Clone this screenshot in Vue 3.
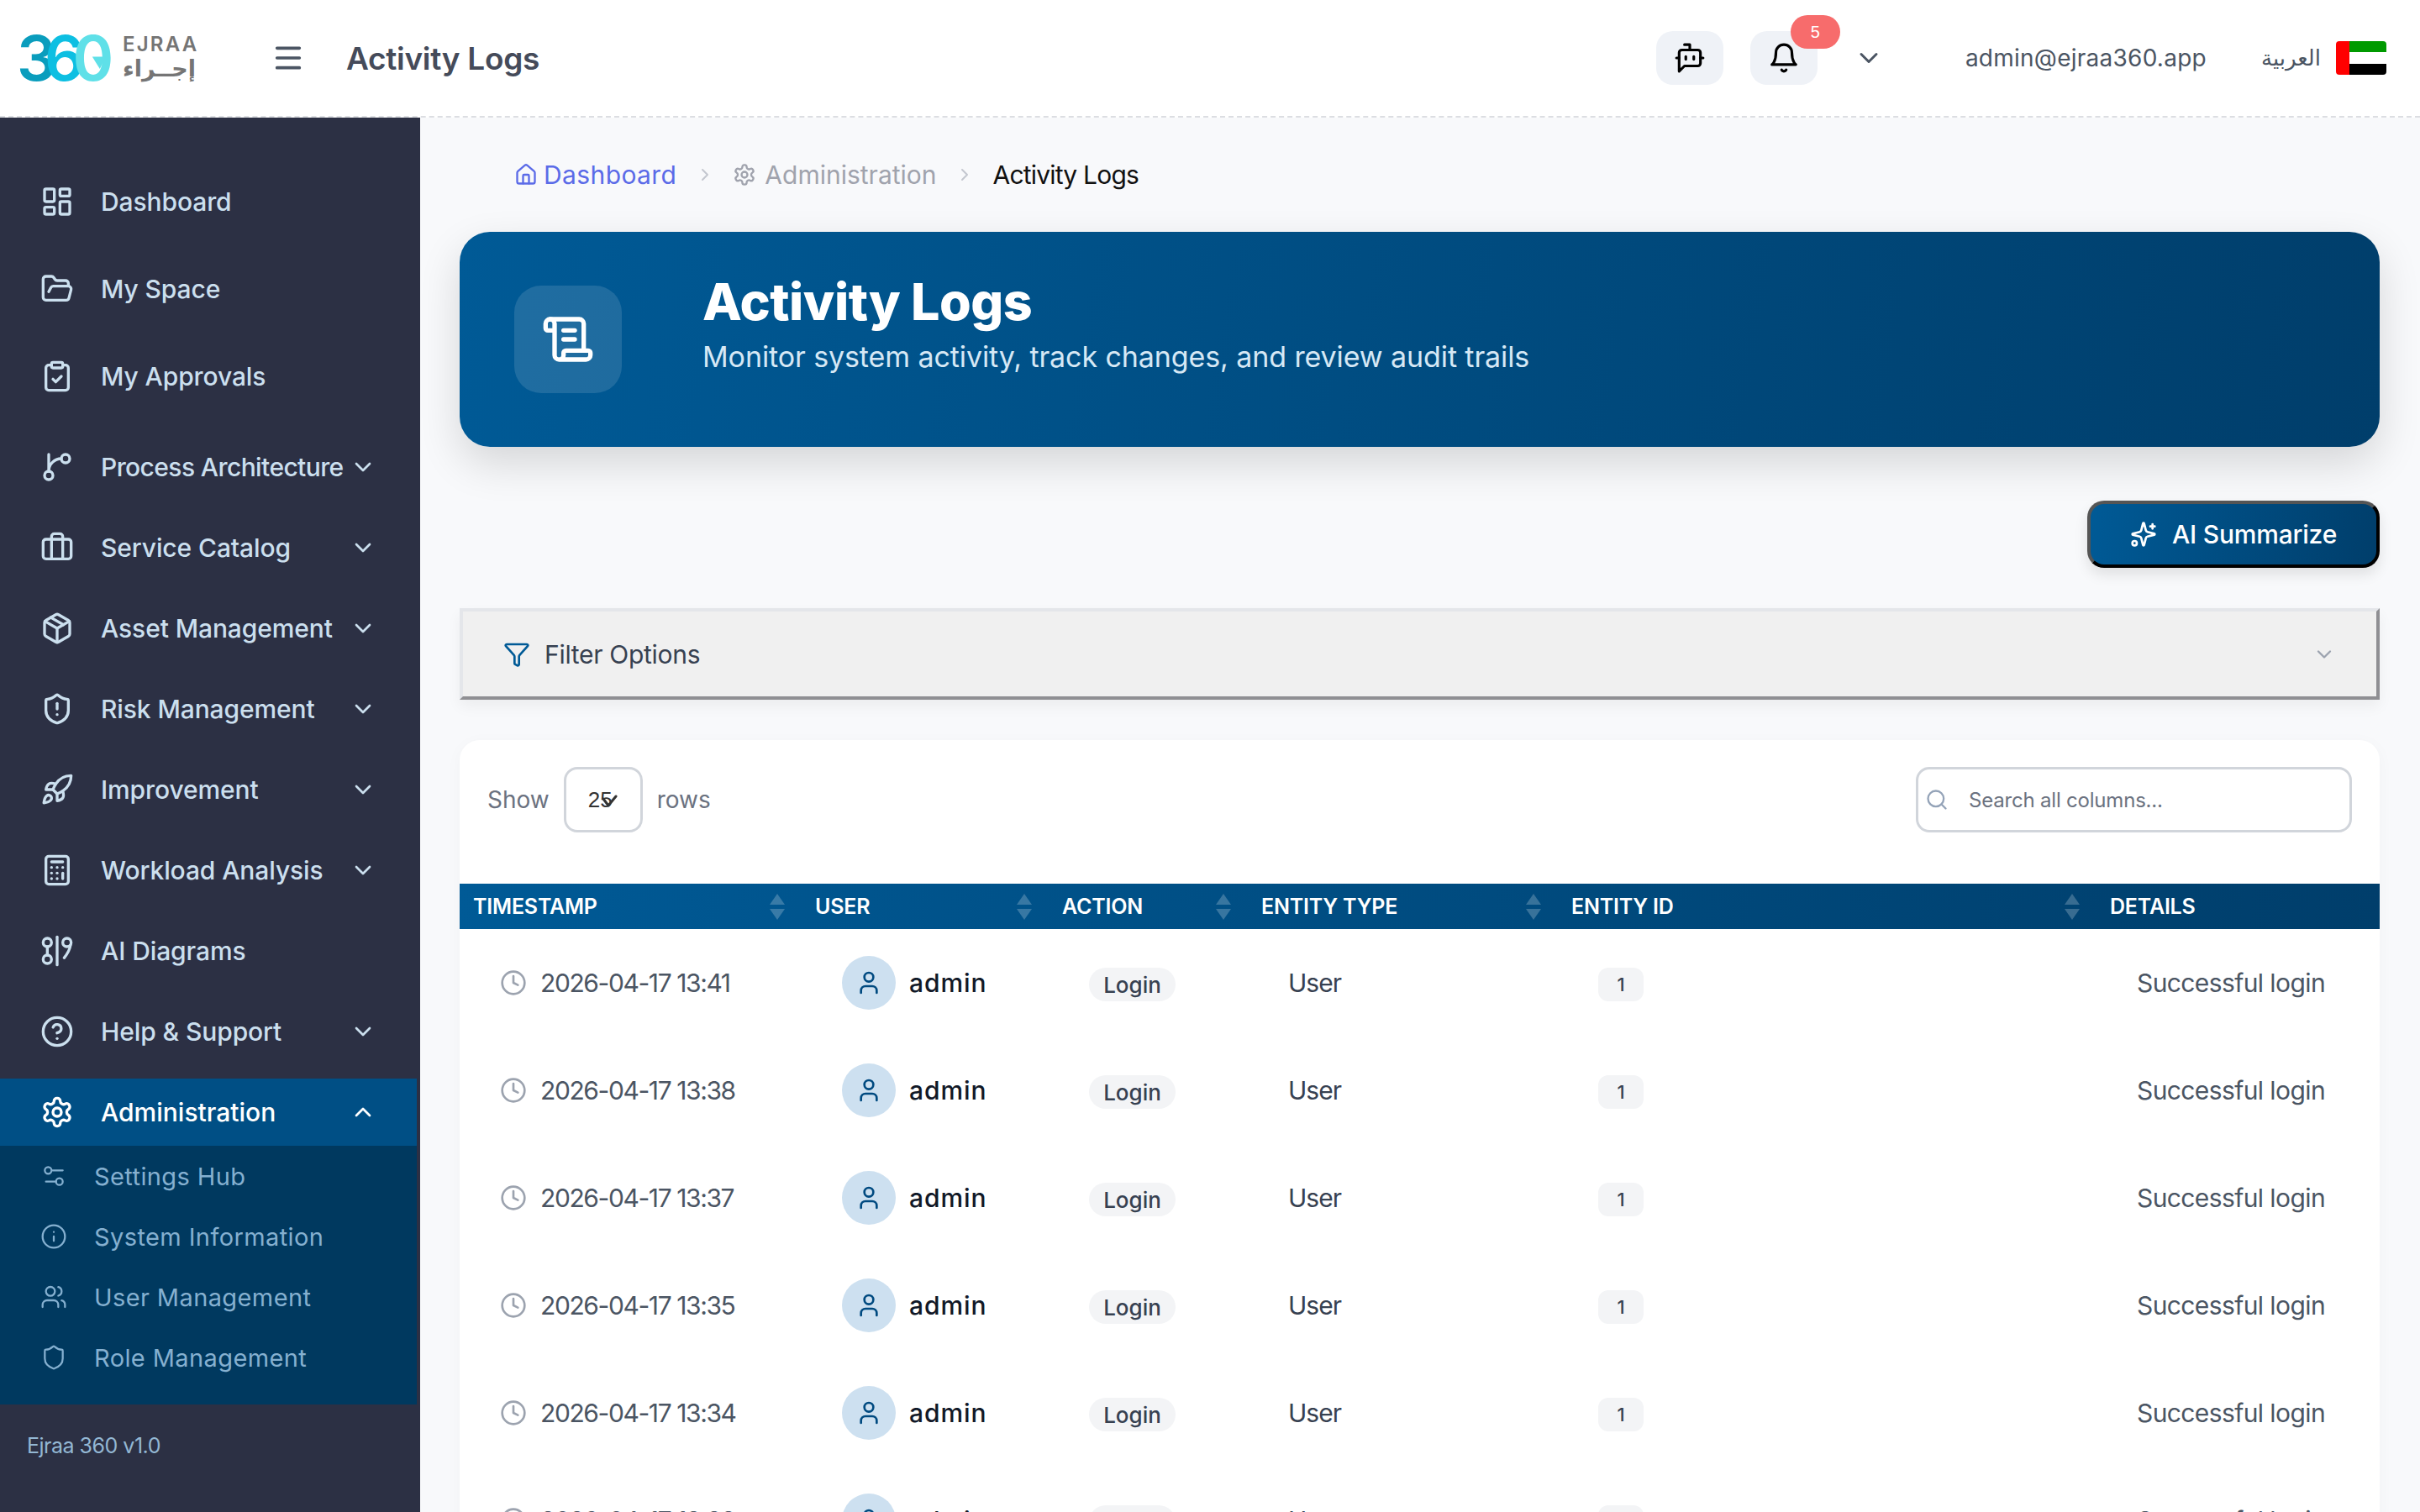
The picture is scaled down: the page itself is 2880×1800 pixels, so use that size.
<template>
  <div class="app">
    <!-- Top bar -->
    <header class="topbar">
      <div class="logo">
        <div class="logo-mark">
          <span class="d1">3</span><span class="d2">6</span><span class="d3">0</span>
          <svg class="logo-arrow" viewBox="0 0 20 20"><polygon points="2,4 20,4 12,20" fill="#5fe0e8" /></svg>
        </div>
        <div class="logo-words">
          <span class="logo-en">EJRAA</span>
          <span class="logo-ar">إجــراء</span>
        </div>
      </div>
      <svg class="burger" viewBox="0 0 24 24" v-html="icons.menu"></svg>
      <h1 class="page-title">Activity Logs</h1>
      <div class="top-right">
        <button class="top-btn"><svg class="top-ico" viewBox="0 0 24 24" v-html="icons.bot"></svg></button>
        <button class="top-btn bell">
          <svg class="top-ico" viewBox="0 0 24 24" v-html="icons.bell"></svg>
          <span class="badge">5</span>
        </button>
        <svg class="top-chev" viewBox="0 0 24 24" v-html="icons.chevron"></svg>
        <span class="email">admin@ejraa360.app</span>
        <span class="lang">العربية</span>
        <div class="flag">
          <div class="flag-red"></div>
          <div class="flag-bands"><i class="g"></i><i class="w"></i><i class="k"></i></div>
        </div>
      </div>
    </header>

    <div class="body">
      <!-- Sidebar -->
      <aside class="sidebar">
        <nav class="nav">
          <a v-for="item in navTop" :key="item.label" class="nav-item top">
            <svg class="nav-ico" viewBox="0 0 24 24" v-html="icons[item.icon]"></svg>
            <span>{{ item.label }}</span>
          </a>
          <a v-for="item in navGroups" :key="item.label" class="nav-item">
            <svg class="nav-ico" viewBox="0 0 24 24" v-html="icons[item.icon]"></svg>
            <span>{{ item.label }}</span>
            <svg v-if="item.more" class="nav-chev" viewBox="0 0 24 24" v-html="icons.chevron"></svg>
          </a>
          <a class="nav-item active">
            <svg class="nav-ico" viewBox="0 0 24 24" v-html="icons.settings"></svg>
            <span>Administration</span>
            <svg class="nav-chev" viewBox="0 0 24 24" v-html="icons.chevronUp"></svg>
          </a>
          <div class="subnav">
            <a v-for="item in navSub" :key="item.label" class="sub-item">
              <svg class="sub-ico" viewBox="0 0 24 24" v-html="icons[item.icon]"></svg>
              <span>{{ item.label }}</span>
            </a>
          </div>
        </nav>
        <div class="version">Ejraa 360 v1.0</div>
      </aside>

      <!-- Main content -->
      <main class="main">
        <div class="crumbs">
          <svg class="crumb-ico home" viewBox="0 0 24 24" v-html="icons.home"></svg>
          <span class="crumb-link">Dashboard</span>
          <svg class="crumb-sep" viewBox="0 0 24 24" v-html="icons.chevronRight"></svg>
          <svg class="crumb-ico gear" viewBox="0 0 24 24" v-html="icons.settings"></svg>
          <span class="crumb-mid">Administration</span>
          <svg class="crumb-sep" viewBox="0 0 24 24" v-html="icons.chevronRight"></svg>
          <span class="crumb-now">Activity Logs</span>
        </div>

        <section class="hero">
          <div class="hero-box">
            <svg class="hero-ico" viewBox="0 0 24 24" v-html="icons.scroll"></svg>
          </div>
          <div class="hero-text">
            <h2>Activity Logs</h2>
            <p>Monitor system activity, track changes, and review audit trails</p>
          </div>
        </section>

        <div class="actions">
          <button class="ai-btn">
            <svg class="ai-ico" viewBox="0 0 24 24" v-html="icons.sparkles"></svg>
            AI Summarize
          </button>
        </div>

        <div class="filter">
          <svg class="filter-ico" viewBox="0 0 24 24" v-html="icons.funnel"></svg>
          <span>Filter Options</span>
          <svg class="filter-chev" viewBox="0 0 24 24" v-html="icons.chevron"></svg>
        </div>

        <section class="card">
          <div class="controls">
            <div class="show">
              <span>Show</span>
              <div class="select">
                25
                <svg class="select-mark" viewBox="0 0 20 20"><path d="M3 6l6 8L18 3" /></svg>
              </div>
              <span>rows</span>
            </div>
            <div class="search">
              <svg class="search-ico" viewBox="0 0 24 24" v-html="icons.search"></svg>
              <span>Search all columns...</span>
            </div>
          </div>

          <table class="table">
            <colgroup>
              <col v-for="w in colWidths" :key="w" :style="{ width: w + 'px' }" />
            </colgroup>
            <thead>
              <tr>
                <th v-for="col in columns" :key="col">
                  <div class="th-in">
                    <span>{{ col }}</span>
                    <span v-if="col !== 'Details'" class="sort"><i class="up"></i><i class="down"></i></span>
                  </div>
                </th>
              </tr>
            </thead>
            <tbody>
              <tr v-for="time in rows" :key="time">
                <td>
                  <div class="when">
                    <svg class="clock" viewBox="0 0 24 24" v-html="icons.clock"></svg>
                    <span>2026-04-17 {{ time }}</span>
                  </div>
                </td>
                <td>
                  <div class="who">
                    <span class="avatar"><svg viewBox="0 0 24 24" v-html="icons.user"></svg></span>
                    <span class="name">admin</span>
                  </div>
                </td>
                <td><span class="pill">Login</span></td>
                <td class="etype">User</td>
                <td><span class="id-pill">1</span></td>
                <td class="details">Successful login</td>
              </tr>
            </tbody>
          </table>
        </section>
      </main>
    </div>
  </div>
</template>

<script setup>
const icons = {
  menu: '<path d="M4 5h16M4 12h16M4 19h16" />',
  bot: '<path d="M12 6V2H8" /><path d="m8 18-4 4V8a2 2 0 0 1 2-2h12a2 2 0 0 1 2 2v8a2 2 0 0 1-2 2Z" /><path d="M2 12h2" /><path d="M9 11v2" /><path d="M15 11v2" /><path d="M20 12h2" />',
  bell: '<path d="M6 8a6 6 0 0 1 12 0c0 7 3 9 3 9H3s3-2 3-9" /><path d="M10.3 21a1.94 1.94 0 0 0 3.4 0" />',
  chevron: '<path d="m6 9 6 6 6-6" />',
  chevronUp: '<path d="m18 15-6-6-6 6" />',
  chevronRight: '<path d="m9 18 6-6-6-6" />',
  dashboard: '<rect width="7" height="9" x="3" y="3" rx="1" /><rect width="7" height="5" x="14" y="3" rx="1" /><rect width="7" height="9" x="14" y="12" rx="1" /><rect width="7" height="5" x="3" y="16" rx="1" />',
  folder: '<path d="m6 14 1.5-2.9A2 2 0 0 1 9.24 10H20a2 2 0 0 1 1.94 2.5l-1.54 6a2 2 0 0 1-1.95 1.5H4a2 2 0 0 1-2-2V5a2 2 0 0 1 2-2h3.9a2 2 0 0 1 1.69.9l.81 1.2a2 2 0 0 0 1.67.9H18a2 2 0 0 1 2 2v2" />',
  clipboard: '<rect width="8" height="4" x="8" y="2" rx="1" /><path d="M16 4h2a2 2 0 0 1 2 2v14a2 2 0 0 1-2 2H6a2 2 0 0 1-2-2V6a2 2 0 0 1 2-2h2" /><path d="m9 14 2 2 4-4" />',
  branch: '<path d="M15 6a9 9 0 0 0-9 9V3" /><circle cx="18" cy="6" r="3" /><circle cx="6" cy="18" r="3" />',
  briefcase: '<path d="M16 20V4a2 2 0 0 0-2-2h-4a2 2 0 0 0-2 2v16" /><rect width="20" height="14" x="2" y="6" rx="2" />',
  box: '<path d="m7.5 4.27 9 5.15" /><path d="M21 8a2 2 0 0 0-1-1.73l-7-4a2 2 0 0 0-2 0l-7 4A2 2 0 0 0 3 8v8a2 2 0 0 0 1 1.73l7 4a2 2 0 0 0 2 0l7-4A2 2 0 0 0 21 16Z" /><path d="m3.3 7 8.7 5 8.7-5" /><path d="M12 22V12" />',
  shieldAlert: '<path d="M20 13c0 5-3.5 7.5-7.66 8.95a1 1 0 0 1-.67-.01C7.5 20.5 4 18 4 13V6a1 1 0 0 1 1-1c2 0 4.5-1.2 6.24-2.72a1.17 1.17 0 0 1 1.52 0C14.51 3.81 17 5 19 5a1 1 0 0 1 1 1z" /><path d="M12 8v4" /><path d="M12 16h.01" />',
  rocket: '<path d="M4.5 16.5c-1.5 1.26-2 5-2 5s3.74-.5 5-2c.71-.84.7-2.13-.09-2.91a2.18 2.18 0 0 0-2.91-.09z" /><path d="m12 15-3-3a22 22 0 0 1 2-3.95A12.88 12.88 0 0 1 22 2c0 2.72-.78 7.5-6 11a22.35 22.35 0 0 1-4 2z" /><path d="M9 12H4s.55-3.03 2-4c1.62-1.08 5 0 5 0" /><path d="M12 15v5s3.03-.55 4-2c1.08-1.62 0-5 0-5" />',
  calculator: '<rect width="16" height="20" x="4" y="2" rx="2" /><path d="M8 6h8" /><path d="M16 14v4" /><path d="M16 10h.01" /><path d="M12 10h.01" /><path d="M8 10h.01" /><path d="M12 14h.01" /><path d="M8 14h.01" /><path d="M12 18h.01" /><path d="M8 18h.01" />',
  diagram: '<circle cx="5" cy="6" r="3" /><circle cx="5" cy="18" r="3" /><path d="M5 9v6" /><path d="M12 2v20" /><circle cx="19" cy="6" r="3" /><path d="M21.5 8c-.5 3-2 6-4.5 9" />',
  help: '<circle cx="12" cy="12" r="10" /><path d="M9.09 9a3 3 0 0 1 5.83 1c0 2-3 3-3 3" /><path d="M12 17h.01" />',
  settings: '<path d="M12.22 2h-.44a2 2 0 0 0-2 2v.18a2 2 0 0 1-1 1.73l-.43.25a2 2 0 0 1-2 0l-.15-.08a2 2 0 0 0-2.73.73l-.22.38a2 2 0 0 0 .73 2.73l.15.1a2 2 0 0 1 1 1.72v.51a2 2 0 0 1-1 1.74l-.15.09a2 2 0 0 0-.73 2.73l.22.38a2 2 0 0 0 2.73.73l.15-.08a2 2 0 0 1 2 0l.43.25a2 2 0 0 1 1 1.73V20a2 2 0 0 0 2 2h.44a2 2 0 0 0 2-2v-.18a2 2 0 0 1 1-1.73l.43-.25a2 2 0 0 1 2 0l.15.08a2 2 0 0 0 2.73-.73l.22-.39a2 2 0 0 0-.73-2.73l-.15-.08a2 2 0 0 1-1-1.74v-.5a2 2 0 0 1 1-1.74l.15-.09a2 2 0 0 0 .73-2.73l-.22-.38a2 2 0 0 0-2.73-.73l-.15.08a2 2 0 0 1-2 0l-.43-.25a2 2 0 0 1-1-1.73V4a2 2 0 0 0-2-2z" /><circle cx="12" cy="12" r="3" />',
  sliders: '<path d="M20 7h-9" /><path d="M14 17H5" /><circle cx="17" cy="17" r="3" /><circle cx="7" cy="7" r="3" />',
  info: '<circle cx="12" cy="12" r="10" /><path d="M12 16v-4" /><path d="M12 8h.01" />',
  users: '<path d="M16 21v-2a4 4 0 0 0-4-4H6a4 4 0 0 0-4 4v2" /><circle cx="9" cy="7" r="4" /><path d="M22 21v-2a4 4 0 0 0-3-3.87" /><path d="M16 3.13a4 4 0 0 1 0 7.75" />',
  shield: '<path d="M20 13c0 5-3.5 7.5-7.66 8.95a1 1 0 0 1-.67-.01C7.5 20.5 4 18 4 13V6a1 1 0 0 1 1-1c2 0 4.5-1.2 6.24-2.72a1.17 1.17 0 0 1 1.52 0C14.51 3.81 17 5 19 5a1 1 0 0 1 1 1z" />',
  home: '<path d="M15 21v-8a1 1 0 0 0-1-1h-4a1 1 0 0 0-1 1v8" /><path d="M3 10a2 2 0 0 1 .709-1.528l7-5.999a2 2 0 0 1 2.582 0l7 5.999A2 2 0 0 1 21 10v9a2 2 0 0 1-2 2H5a2 2 0 0 1-2-2z" />',
  scroll: '<path d="M15 12h-5" /><path d="M15 8h-5" /><path d="M19 17V5a2 2 0 0 0-2-2H4" /><path d="M8 21h12a2 2 0 0 0 2-2v-1a1 1 0 0 0-1-1H11a1 1 0 0 0-1 1v1a2 2 0 1 1-4 0V5a2 2 0 1 0-4 0v2a1 1 0 0 0 1 1h3" />',
  sparkles: '<path d="M9.937 15.5A2 2 0 0 0 8.5 14.063l-6.135-1.582a.5.5 0 0 1 0-.962L8.5 9.936A2 2 0 0 0 9.937 8.5l1.582-6.135a.5.5 0 0 1 .963 0L14.063 8.5A2 2 0 0 0 15.5 9.937l6.135 1.581a.5.5 0 0 1 0 .964L15.5 14.063a2 2 0 0 0-1.437 1.437l-1.582 6.135a.5.5 0 0 1-.963 0z" /><path d="M20 3v4" /><path d="M22 5h-4" /><circle cx="4" cy="20" r="2" />',
  funnel: '<path d="M10 20a1 1 0 0 0 .553.895l2 1A1 1 0 0 0 14 21v-7a2 2 0 0 1 .517-1.341L21.74 4.67A1 1 0 0 0 21 3H3a1 1 0 0 0-.742 1.67l7.225 7.989A2 2 0 0 1 10 14z" />',
  search: '<circle cx="11" cy="11" r="8" /><path d="m21 21-4.3-4.3" />',
  clock: '<circle cx="12" cy="12" r="10" /><path d="M12 6v6l4 2" />',
  user: '<path d="M19 21v-2a4 4 0 0 0-4-4H9a4 4 0 0 0-4 4v2" /><circle cx="12" cy="7" r="4" />',
}

const navTop = [
  { label: 'Dashboard', icon: 'dashboard' },
  { label: 'My Space', icon: 'folder' },
  { label: 'My Approvals', icon: 'clipboard' },
]
const navGroups = [
  { label: 'Process Architecture', icon: 'branch', more: true },
  { label: 'Service Catalog', icon: 'briefcase', more: true },
  { label: 'Asset Management', icon: 'box', more: true },
  { label: 'Risk Management', icon: 'shieldAlert', more: true },
  { label: 'Improvement', icon: 'rocket', more: true },
  { label: 'Workload Analysis', icon: 'calculator', more: true },
  { label: 'AI Diagrams', icon: 'diagram', more: false },
  { label: 'Help & Support', icon: 'help', more: true },
]
const navSub = [
  { label: 'Settings Hub', icon: 'sliders' },
  { label: 'System Information', icon: 'info' },
  { label: 'User Management', icon: 'users' },
  { label: 'Role Management', icon: 'shield' },
]

const columns = ['Timestamp', 'User', 'Action', 'Entity Type', 'Entity ID', 'Details']
const colWidths = [407, 294, 237, 369, 641, 337]
const rows = ['13:41', '13:38', '13:37', '13:35', '13:34', '13:33']
</script>

<style scoped>
.app {
  width: 2880px;
  height: 1800px;
  overflow: hidden;
  display: flex;
  flex-direction: column;
  font-family: Inter, "Noto Sans", sans-serif;
  background: #f8f9fb;
  color: #374151;
}
svg {
  fill: none;
  stroke: currentColor;
  stroke-width: 2;
  stroke-linecap: round;
  stroke-linejoin: round;
  flex: none;
}

/* top bar */
.topbar {
  height: 138px;
  flex: none;
  display: flex;
  align-items: center;
  background: #fff;
  border-bottom: 2px dashed #dcdee2;
  padding: 0 40px 0 20px;
}
.logo { display: flex; align-items: center; width: 288px; }
.logo-mark {
  position: relative;
  width: 106px;
  height: 54px;
  margin-right: 20px;
  font-size: 74px;
  font-weight: 600;
  line-height: 54px;
  letter-spacing: -14px;
  white-space: nowrap;
}
.d1 { color: #0a9dbd; }
.d2 { color: #0dbfe2; }
.d3 { color: #5fe0e8; }
.logo-arrow { position: absolute; right: 0; top: 22px; width: 18px; height: 18px; stroke: none; }
.logo-words { display: flex; flex-direction: column; color: #757575; }
.logo-en { font-size: 24px; font-weight: 600; letter-spacing: 2.2px; line-height: 26px; }
.logo-ar { font-family: "DejaVu Sans", sans-serif; font-size: 27px; line-height: 32px; font-weight: 700; direction: rtl; text-align: right; width: 87px; }
.burger { width: 40px; height: 40px; color: #4b5563; stroke-width: 2.2; margin-left: 15px; }
.page-title { margin: 0 0 0 49px; font-size: 37px; font-weight: 600; color: #454b5a; letter-spacing: -.3px; }
.top-right { margin-left: auto; display: flex; align-items: center; }
.top-btn {
  position: relative;
  width: 80px;
  height: 64px;
  margin-right: 32px;
  padding: 0;
  border: 0;
  border-radius: 20px;
  background: #eff2f7;
  display: flex;
  align-items: center;
  justify-content: center;
  color: #000;
}
.top-ico { width: 38px; height: 38px; stroke-width: 2; }
.top-btn.bell { margin-right: 43px; }
.badge {
  position: absolute;
  left: 48px;
  top: -19px;
  width: 59px;
  height: 40px;
  border-radius: 20px;
  background: #f76c6c;
  color: #fff;
  font-size: 20px;
  font-weight: 500;
  display: flex;
  align-items: center;
  justify-content: center;
}
.top-chev { width: 36px; height: 36px; color: #4b5563; margin-right: 97px; }
.email { font-size: 28px; color: #4b5563; letter-spacing: .25px; margin-right: 65px; }
.lang { font-family: "DejaVu Sans", sans-serif; font-size: 26px; color: #4b5563; margin-right: 18px; }
.flag { width: 60px; height: 40px; border-radius: 4px; overflow: hidden; display: flex; }
.flag-red { width: 16px; background: #f00; }
.flag-bands { flex: 1; display: flex; flex-direction: column; }
.flag-bands i { flex: 1; display: block; }
.g { background: #009a00; }
.w { background: #fff; }
.k { background: #000; }

.body { flex: 1; display: flex; min-height: 0; }

/* sidebar */
.sidebar {
  width: 500px;
  flex: none;
  background: #2c3044;
  color: #cbdfee;
  display: flex;
  flex-direction: column;
}
.nav { padding: 48px 4px 0 0; display: flex; flex-direction: column; }
.nav-item {
  height: 80px;
  flex: none;
  margin: 8px 0;
  padding-left: 48px;
  display: flex;
  align-items: center;
  font-size: 30px;
  font-weight: 500;
  letter-spacing: -.1px;
  position: relative;
}
.nav-item.top { margin: 12px 0; }
.nav-item.top:nth-child(3) { margin-bottom: 20px; }
.nav-item:nth-child(4) { letter-spacing: -.6px; }
.nav-ico { width: 40px; height: 40px; margin-right: 32px; stroke-width: 2; }
.nav-chev { position: absolute; left: 416px; top: 24px; width: 32px; height: 32px; }
.nav-item.active { background: #004f85; color: #fff; margin-bottom: 0; letter-spacing: 0; }
.subnav { background: #00395f; padding-bottom: 20px; }
.sub-item {
  height: 72px;
  padding-left: 48px;
  display: flex;
  align-items: center;
  font-size: 29px;
  letter-spacing: .4px;
  color: #85b0d0;
}
.sub-ico { width: 32px; height: 32px; margin-right: 32px; stroke-width: 1.7; }
.version { padding: 34px 0 0 32px; font-size: 25px; letter-spacing: -.5px; color: #93b7d3; }

/* main */
.main { flex: 1; min-width: 0; padding: 0 48px 0 47px; }
.crumbs {
  height: 136px;
  padding: 0 0 0 65px;
  display: flex;
  align-items: center;
  font-size: 30px;
  box-sizing: border-box;
}
.crumb-ico { width: 28px; height: 28px; }
.home { color: #5b6be8; margin-right: 7px; }
.gear { color: #a0a3ad; margin-right: 10px; }
.crumb-link { color: #5b6be8; letter-spacing: .4px; }
.crumb-mid { color: #a0a3ad; }
.crumb-now { color: #111; letter-spacing: -.8px; }
.crumb-sep { width: 24px; height: 24px; color: #c4c7cf; margin: 0 21.5px; }

.hero {
  height: 256px;
  border-radius: 36px;
  background: linear-gradient(100deg, #005a96, #003e6b);
  box-shadow: 0 20px 50px rgba(0, 0, 0, .14);
  padding-left: 65px;
  display: flex;
  align-items: center;
  color: #fff;
}
.hero-box {
  width: 128px;
  height: 128px;
  border-radius: 32px;
  background: rgba(255, 255, 255, .12);
  display: flex;
  align-items: center;
  justify-content: center;
}
.hero-ico { width: 64px; height: 64px; }
.hero-text { margin: -42px 0 0 96px; }
.hero-text h2 { margin: 0; font-size: 61px; font-weight: 800; line-height: 76px; letter-spacing: -.5px; }
.hero-text p { margin: 7px 0 0; font-size: 34px; letter-spacing: -.1px; color: #d6e8f5; }

.actions { display: flex; justify-content: flex-end; margin-top: 64px; }
.ai-btn {
  width: 348px;
  height: 80px;
  border-radius: 20px;
  border: 4px solid;
  border-color: #555 #000 #000 #555;
  background: linear-gradient(100deg, #005a96, #003e6b);
  box-shadow: 0 8px 16px rgba(0, 0, 0, .1);
  color: #fff;
  font-family: inherit;
  font-size: 30px;
  font-weight: 500;
  letter-spacing: -.2px;
  display: flex;
  align-items: center;
  justify-content: center;
  gap: 18px;
  padding: 0;
}
.ai-ico { width: 32px; height: 32px; }

.filter {
  height: 109px;
  margin-top: 48px;
  box-sizing: border-box;
  border: 4px solid;
  border-color: #e4e6ea #8f8f93 #8f8f93 #e4e6ea;
  background: #f0f0f0;
  box-shadow: 0 8px 16px rgba(0, 0, 0, .05);
  padding: 0 48px;
  display: flex;
  align-items: center;
  font-size: 30px;
  letter-spacing: -.3px;
  color: #374151;
}
.filter-ico { width: 32px; height: 32px; color: #005a96; margin-right: 17px; }
.filter-chev { width: 28px; height: 28px; color: #9ca3af; margin-left: auto; }

.card {
  margin-top: 48px;
  background: #fff;
  border-radius: 24px 24px 0 0;
  box-shadow: 0 4px 20px rgba(0, 0, 0, .03);
  height: 1000px;
}
.controls {
  height: 171px;
  padding: 32px 33px 0;
  box-sizing: border-box;
  display: flex;
  justify-content: space-between;
  align-items: flex-start;
}
.show { display: flex; align-items: center; height: 78px; color: #6b7280; font-size: 28px; gap: 17px; }
.select {
  position: relative;
  width: 94px;
  height: 78px;
  box-sizing: border-box;
  border: 3px solid #d1d5db;
  border-radius: 16px;
  padding-left: 26px;
  display: flex;
  align-items: center;
  font-family: "Liberation Sans", sans-serif;
  font-size: 26px;
  color: #333;
}
.select-mark { position: absolute; left: 41px; top: 29px; width: 20px; height: 20px; color: #333; stroke-width: 3; }
.search {
  width: 519px;
  height: 78px;
  box-sizing: border-box;
  border: 3px solid #d1d5db;
  border-radius: 16px;
  padding-left: 8px;
  display: flex;
  align-items: center;
  font-size: 24px;
  letter-spacing: -.2px;
  color: #6b7280;
}
.search-ico { width: 28px; height: 28px; color: #94a3b8; margin-right: 24px; }

.table { width: 2285px; border-collapse: collapse; table-layout: fixed; }
thead tr { background: linear-gradient(100deg, #005a96, #003e6b); }
th {
  height: 54px;
  padding: 0 16px;
  text-align: left;
  color: #fff;
  font-size: 25px;
  font-weight: 600;
  text-transform: uppercase;
  letter-spacing: -.2px;
}
.th-in { display: flex; align-items: center; justify-content: space-between; padding-right: 4px; }
.sort { display: flex; flex-direction: column; gap: 5px; opacity: .22; }
.sort i { display: block; width: 0; height: 0; border-left: 9px solid transparent; border-right: 9px solid transparent; }
.sort .up { border-bottom: 13px solid #fff; }
.sort .down { border-top: 13px solid #fff; }
td { height: 128px; padding: 0 48px; font-size: 30px; color: #4b5563; white-space: nowrap; }
.when { display: flex; align-items: center; letter-spacing: -1.4px; }
.clock { width: 32px; height: 32px; color: #9ca3af; margin-right: 16px; }
.who { display: flex; align-items: center; }
.avatar {
  width: 64px;
  height: 64px;
  border-radius: 50%;
  background: #cde0f0;
  display: flex;
  align-items: center;
  justify-content: center;
  color: #004a80;
  margin-right: 16px;
}
.avatar svg { width: 32px; height: 32px; }
.name { color: #111827; font-weight: 500; letter-spacing: .9px; }
.pill, .id-pill {
  display: inline-flex;
  align-items: center;
  justify-content: center;
  height: 40px;
  margin-top: 4px;
  background: #f3f4f6;
  color: #374151;
  vertical-align: middle;
}
.pill { width: 103px; border-radius: 20px; font-size: 26px; font-weight: 500; }
.id-pill { width: 54px; border-radius: 12px; font-size: 22px; font-weight: 500; }
.etype { color: #374151; letter-spacing: -1px; }
.details { color: #4b5563; padding-right: 0; letter-spacing: -.6px; }
</style>

<style>
html, body { margin: 0; background: #f8f9fb; }
</style>
